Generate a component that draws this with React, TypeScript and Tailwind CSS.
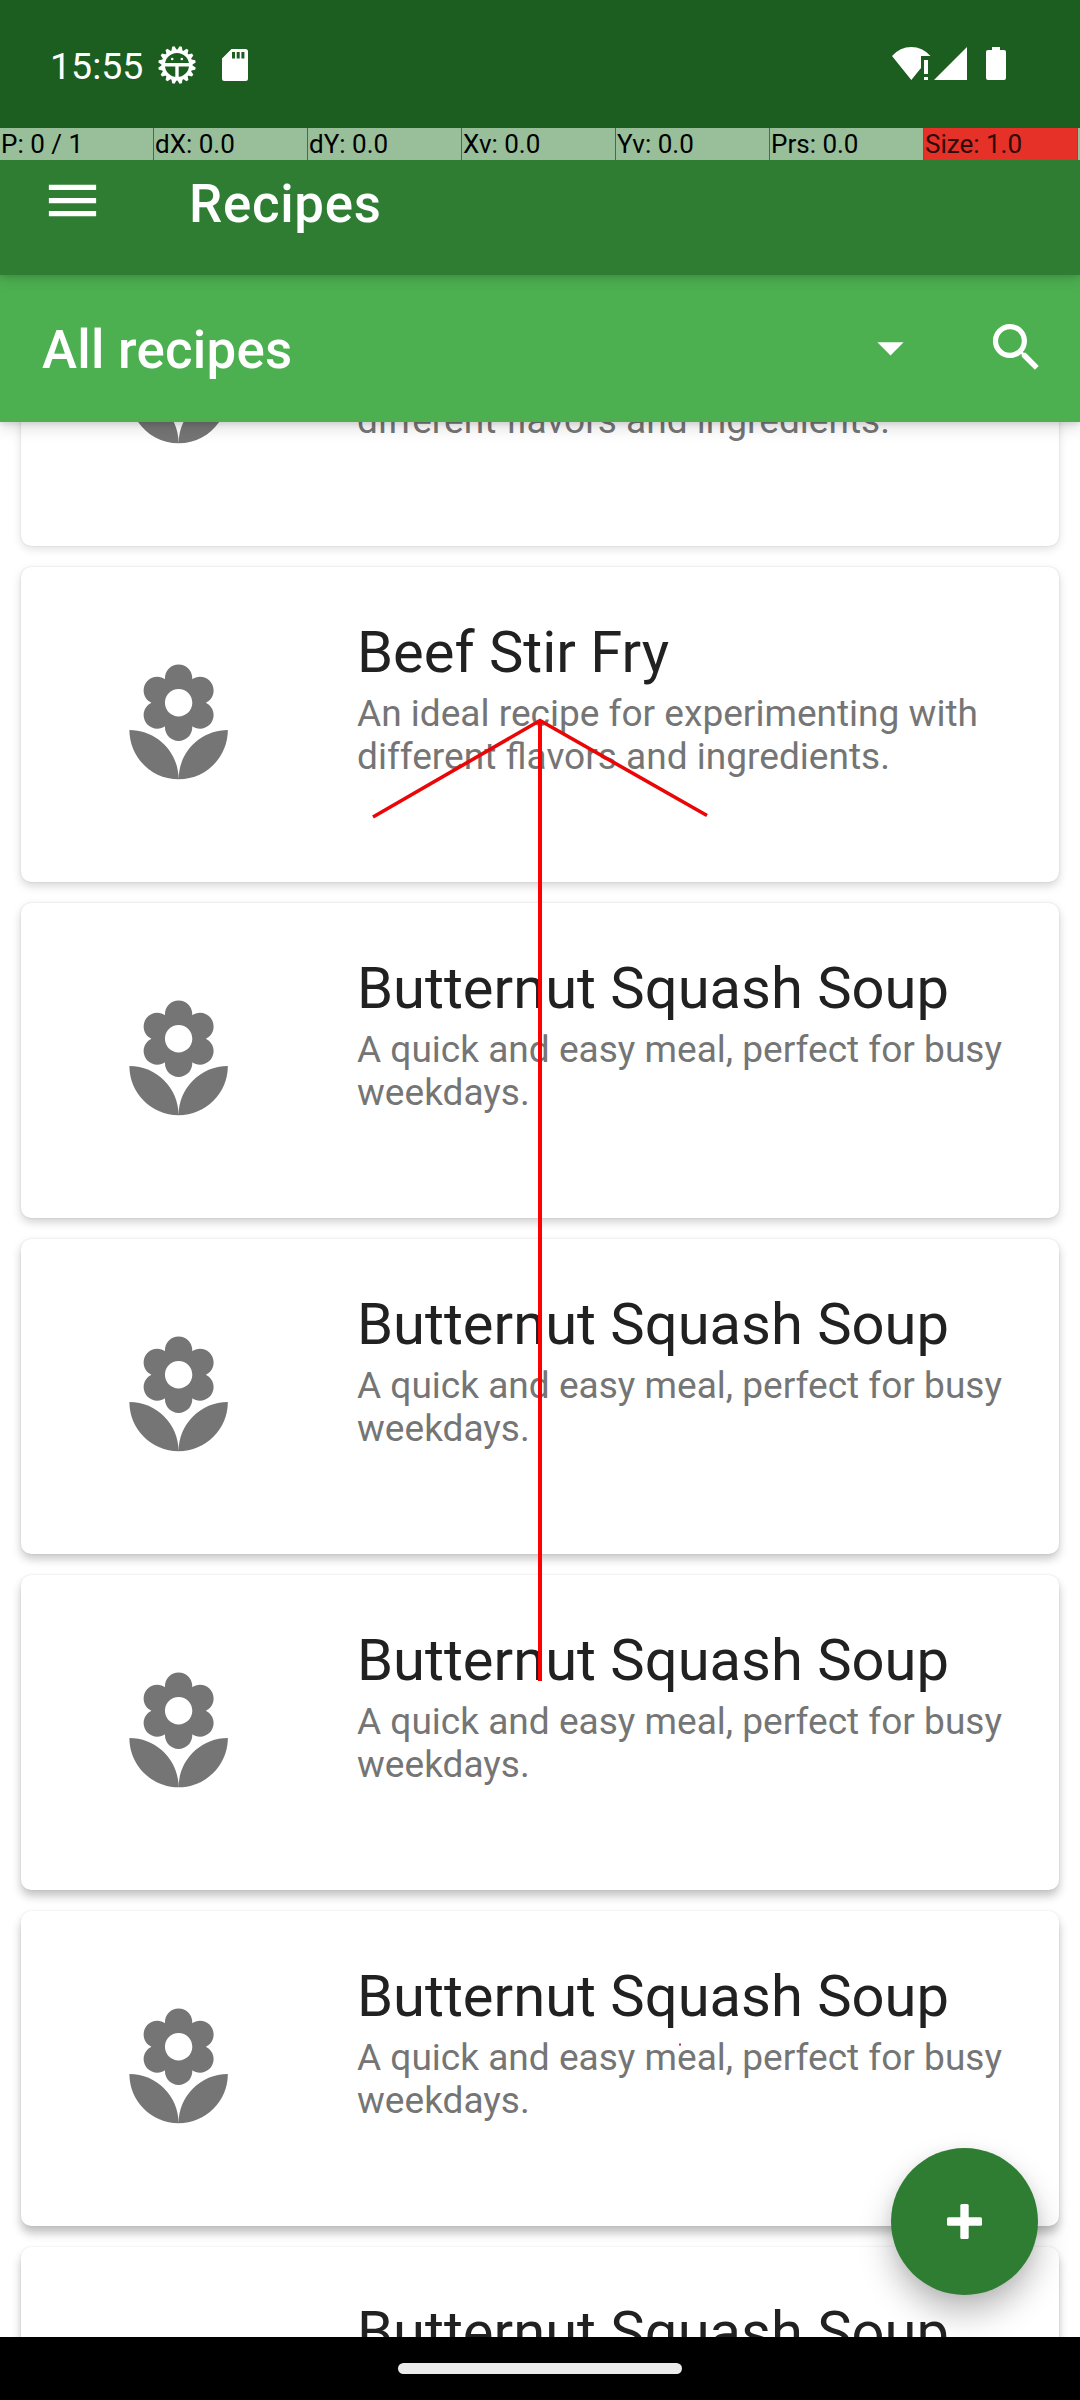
import React from "react";

const FLORIST =
  "M12 22c4.97 0 9-4.03 9-9-4.97 0-9 4.03-9 9zM5.6 10.25c0 1.38 1.12 2.5 2.5 2.5.53 0 1.01-.16 1.42-.44l-.02.19c0 1.38 1.12 2.5 2.5 2.5s2.5-1.12 2.5-2.5l-.02-.19c.4.28.89.44 1.42.44 1.38 0 2.5-1.12 2.5-2.5 0-1-.59-1.85-1.43-2.25.84-.4 1.43-1.25 1.43-2.25 0-1.38-1.12-2.5-2.5-2.5-.53 0-1.01.16-1.42.44l.02-.19C14.5 2.12 13.38 1 12 1S9.5 2.12 9.5 3.5l.02.19c-.4-.28-.89-.44-1.42-.44-1.38 0-2.5 1.12-2.5 2.5 0 1 .59 1.85 1.43 2.25-.84.4-1.43 1.25-1.43 2.25zM12 5.5c1.38 0 2.5 1.12 2.5 2.5s-1.12 2.5-2.5 2.5S9.5 9.38 9.5 8s1.12-2.5 2.5-2.5zM3 13c0 4.97 4.03 9 9 9 0-4.97-4.03-9-9-9z";

const SOUP = { title: "Butternut Squash Soup", text: "A quick and easy meal, perfect for busy weekdays." };
const BEEF = { title: "Beef Stir Fry", text: "An ideal recipe for experimenting with different flavors and ingredients." };

const RECIPES = [
  { ...BEEF, shadow: "shadow-[0_0_2px_rgba(0,0,0,0.14),0_3px_10px_rgba(0,0,0,0.12)]" },
  { ...BEEF, shadow: "shadow-[0_0_2px_rgba(0,0,0,0.14),0_4px_10px_rgba(0,0,0,0.16)]" },
  { ...SOUP, shadow: "shadow-[0_0_2px_rgba(0,0,0,0.13),0_4px_10px_rgba(0,0,0,0.19)]" },
  { ...SOUP, shadow: "shadow-[0_0_2px_rgba(0,0,0,0.12),0_5px_10px_rgba(0,0,0,0.22)]" },
  { ...SOUP, shadow: "shadow-[0_0_2px_rgba(0,0,0,0.11),0_6px_10px_rgba(0,0,0,0.24)]" },
  { ...SOUP, shadow: "shadow-[0_0_2px_rgba(0,0,0,0.1),0_7px_10px_rgba(0,0,0,0.25)]" },
  { ...SOUP, shadow: "shadow-[0_0_2px_rgba(0,0,0,0.1),0_7px_10px_rgba(0,0,0,0.25)]" },
];

const POINTER = ["P: 0 / 1", "dX: 0.0", "dY: 0.0", "Xv: 0.0", "Yv: 0.0", "Prs: 0.0", "Size: 1.0"];

function DebugIcon() {
  const teeth = Array.from({ length: 16 }, (_, i) => i * 22.5 + 11.25);
  return (
    <svg className="ml-[15px] h-[38px] w-[38px]" viewBox="-19 -19 38 38" fill="#fff">
      {teeth.map((a) => (
        <path key={a} d="M-3 -14L-1.2 -18.8H1.2L3 -14Z" transform={`rotate(${a})`} />
      ))}
      <circle r="13.8" fill="none" stroke="#fff" strokeWidth="3.4" />
      <path d="M-13 -2H13V1.6H1.7V13H-1.7V1.6H-13Z" />
      <circle cx="-4.8" cy="-6" r="1.3" />
      <circle cx="4.8" cy="-6" r="1.3" />
    </svg>
  );
}

function StatusBar() {
  return (
    <div className="flex h-[128px] items-start bg-[#1b5e20]">
      <div className="ml-[50px] mt-[44px] text-[37.5px] leading-[44px] text-white">15:55</div>
      <div className="mt-[46px] flex">
        <DebugIcon />
        <svg className="ml-[26px] mt-[3px] h-[32px] w-[26px]" viewBox="0 0 26 32" fill="#fff">
          <path
            fillRule="evenodd"
            d="M9.5 0H23.5Q26 0 26 2.5V29.5Q26 32 23.5 32H2.5Q0 32 0 29.5V9.5ZM10 3V9.5H13V3ZM14.7 3V9.5H17.7V3ZM19.4 3V9.5H22.4V3Z"
          />
        </svg>
      </div>
      <div className="ml-auto mr-[74px] mt-[47px] flex">
        <svg className="h-[33px] w-[39px]" viewBox="0 0 39 33" fill="#fff">
          <path d="M0 9Q8 0 19.3 0Q30.5 0 38.5 9H29V21L19.3 33ZM32 13H36V27H32ZM32 30H36V33H32Z" />
        </svg>
        <svg className="ml-[3px] h-[33px] w-[33px]" viewBox="0 0 33 33" fill="#fff">
          <path d="M33 0V33H0Z" />
        </svg>
        <svg className="ml-[19px] h-[33px] w-[20px]" viewBox="0 0 20 33" fill="#fff">
          <path d="M6 0H14V3H18Q20 3 20 5V31Q20 33 18 33H2Q0 33 0 31V5Q0 3 2 3H6Z" />
        </svg>
      </div>
    </div>
  );
}

function PointerBar() {
  return (
    <div className="flex h-[32px] bg-[#2e7d32]">
      {POINTER.map((label, i) => (
        <div
          key={label}
          className={
            "w-[154px] shrink-0 border-r pl-[1px] text-[26px] leading-[32px] " +
            (i === 4 ? "border-[#c0392b] " : "border-[#2e7d32] ") +
            (i === 6 ? "bg-[#e53127] text-[#2b0b07]" : "bg-[#98be9a] text-black")
          }
        >
          {label}
        </div>
      ))}
      <div className="grow bg-[#98be9a]" />
    </div>
  );
}

function Card({ title, text, shadow }: { title: string; text: string; shadow: string }) {
  return (
    <div className={"flex h-[315px] shrink-0 rounded-[10px] bg-white " + shadow}>
      <svg className="ml-[92px] mt-[92px] h-[131.25px] w-[131.25px] shrink-0" viewBox="0 0 24 24" fill="#757575">
        <path d={FLORIST} />
      </svg>
      <div className="ml-[112.75px] w-[660px] pt-[51px]">
        <div className="text-[57.9px] leading-[68px] text-[#212121]">{title}</div>
        <div className="mt-[6px] text-[37.05px] leading-[43px] text-[#757575]">{text}</div>
      </div>
    </div>
  );
}

export default function App() {
  return (
    <div className="relative flex h-[2400px] w-[1080px] flex-col overflow-hidden bg-white font-['Roboto',sans-serif]">
      <div className="relative z-20 shadow-[0_2px_5px_rgba(0,0,0,0.1),0_4px_14px_rgba(0,0,0,0.12)]">
        <StatusBar />
        <PointerBar />
        <div className="flex h-[115px] items-start bg-[#2e7d32]">
          <svg className="ml-[41px] mt-[9px] h-[63px] w-[63px]" viewBox="0 0 24 24" fill="#fff">
            <path d="M3 18h18v-2H3v2zm0-5h18v-2H3v2zm0-7v2h18V6H3z" />
          </svg>
          <div className="ml-[85px] mt-[13px] text-[52.8px] font-medium leading-[62px] tracking-[0.7px] text-white">
            Recipes
          </div>
        </div>
      </div>

      <div className="relative z-10 flex h-[147px] shrink-0 items-start bg-[#4caf50] shadow-[0_2px_5px_rgba(0,0,0,0.1),0_5px_16px_rgba(0,0,0,0.14)]">
        <div className="ml-[42px] mt-[44px] grow text-[52.8px] font-medium leading-[62px] tracking-[0.25px] text-white">
          All recipes
        </div>
        <svg className="mt-[41px] h-[63px] w-[63px]" viewBox="0 0 24 24" fill="#fff">
          <path d="M7 10l5 5 5-5z" />
        </svg>
        <svg className="ml-[63px] mr-[32px] mt-[41px] h-[63px] w-[63px]" viewBox="0 0 24 24" fill="#fff">
          <path d="M15.5 14h-.79l-.28-.27C15.41 12.59 16 11.11 16 9.5 16 5.91 13.09 3 9.5 3S3 5.91 3 9.5 5.91 16 9.5 16c1.61 0 3.09-.59 4.23-1.57l.27.28v.79l5 4.99L20.49 19l-4.99-5zm-6 0C7.01 14 5 11.99 5 9.5S7.01 5 9.5 5 14 7.01 14 9.5 11.99 14 9.5 14z" />
        </svg>
      </div>

      <div className="h-[1915px] shrink-0 overflow-hidden px-[21px]">
        <div className="-mt-[191px] flex flex-col gap-[21px]">
          {RECIPES.map((r, i) => (
            <Card key={i} {...r} />
          ))}
        </div>
      </div>

      <div className="relative z-40 flex h-[63px] shrink-0 justify-center bg-black">
        <div className="mt-[26px] h-[11px] w-[284px] rounded-full bg-[#ebebeb]" />
      </div>

      <button className="absolute left-[891px] top-[2148px] z-30 flex h-[147px] w-[147px] items-center justify-center rounded-full bg-[#2e7d32] shadow-[0_18px_32px_rgba(0,0,0,0.26),0_2px_14px_rgba(0,0,0,0.06)]">
        <svg className="h-[35px] w-[35px]" viewBox="0 0 35 35" fill="#fff">
          <rect x="0" y="13.3" width="35" height="8.4" rx="1.5" />
          <rect x="13.3" y="0" width="8.4" height="35" rx="1.5" />
        </svg>
      </button>

      {/* swipe gesture trace */}
      <svg className="pointer-events-none absolute left-0 top-0 z-50" width="1080" height="2400" fill="none" strokeWidth="4">
        <path d="M373 817L540 720.5L707 815.5" stroke="#ea0606" strokeWidth="3.6" />
        <path d="M540 720V1681" stroke="#ff0000" />
        <path d="M679 2044.5h2" stroke="#b03040" strokeWidth="2" />
      </svg>
    </div>
  );
}
